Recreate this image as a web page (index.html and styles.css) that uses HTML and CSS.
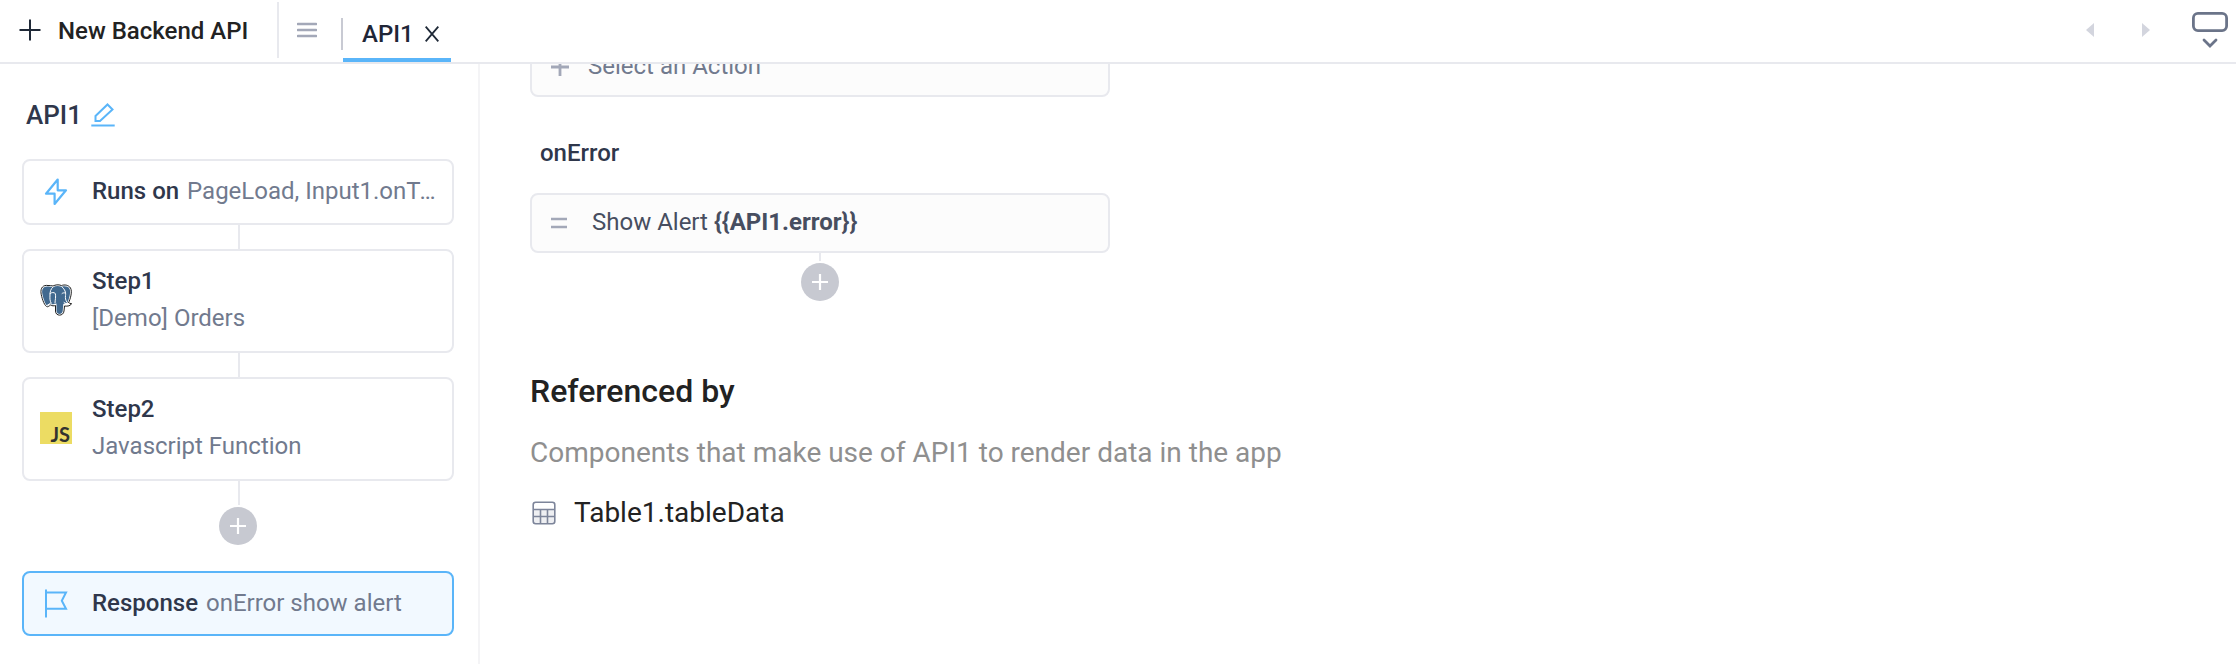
FILE: index.html
```html
<!DOCTYPE html>
<html lang="en">
  <head>
    <meta charset="UTF-8" />
    <title>API1</title>
    <link rel="stylesheet" href="styles.css">
  </head>
  <body>
    <header class="topbar">
      <button class="new-api">
        <svg width="22" height="22" viewBox="0 0 22 22"><path d="M11 0.5v21M0.5 11h21" stroke="#1f2937" stroke-width="2" fill="none" /></svg>
        <span>New Backend API</span>
      </button>
      <button class="menu-btn">
        <svg width="20" height="16" viewBox="0 0 20 16"><path d="M1 2h18M1 8h18M1 14h18" stroke="#a3a8b8" stroke-width="2.6" stroke-linecap="round" /></svg>
      </button>
      <div class="tab active">
        <span>API1</span>
        <svg width="14" height="16" viewBox="0 0 14 16"><path d="M0.7 0.7l12.6 14.6M13.3 0.7L0.7 15.3" stroke="#1f2937" stroke-width="1.8" /></svg>
      </div>
      <div class="topbar-right">
        <svg width="8" height="14" viewBox="0 0 8 14"><path d="M8 0v14L0 7z" fill="#d3d5de" /></svg>
        <svg width="8" height="14" viewBox="0 0 8 14"><path d="M0 0v14l8-7z" fill="#d3d5de" /></svg>
        <svg class="dock" width="36" height="36" viewBox="0 0 36 36" fill="none" stroke="#6b7489">
          <rect x="1.4" y="1.4" width="33.2" height="17.2" rx="4.5" stroke-width="2.8" />
          <path d="M12 28l6 6 6-6" stroke-width="2.8" stroke-linecap="round" />
        </svg>
      </div>
    </header>

    <div class="layout">
      <aside class="sidebar">
        <div class="api-name">
          <span>API1</span>
          <svg width="24" height="24" viewBox="0 0 24 24" fill="none" stroke="#5ab5f9" stroke-width="2">
            <path d="M4.5 13L16.5 1.5l5 5L9 18H4.5z" />
            <path d="M0.3 22.5h23.4" />
          </svg>
        </div>

        <div class="step">
          <svg class="step-icon" width="32" height="32" viewBox="0 0 32 32" fill="none" stroke="#5ab5f9" stroke-width="2.2" stroke-linejoin="round">
            <path d="M17.7 4.500L6 18.700h8.600V29L26 15.300h-8.300z" />
          </svg>
          <div class="step-line"><b>Runs on</b> PageLoad, Input1.onTextChanged</div>
        </div>
        <div class="connector"></div>

        <div class="step tall">
          <svg class="step-icon" width="32" height="32" viewBox="0 0 32 32" fill="none" stroke-linejoin="round" stroke-linecap="round">
            <!-- head, ears and trunk -->
            <path d="M8 1.500C3 0.500 0.500 4 1 9c0.500 4 3 12 5.500 13.500 1.500 0.800 2.500-0.500 4-1.500 1.500 1 3.500 1 5 0.500V27c0 5.500 8 5.500 8.500 0l0.500-5c3 0.500 6.500-0.200 7-2.500-1 0-2 0-3-0.500C30.500 14.500 32.500 7.500 30.500 4 28.500 0.800 24.500 0.500 21.500 1.500 18 0.300 15.500 0.800 13 2 11.500 1.500 9.500 1.500 8 1.500z" fill="#fff" stroke="#222" stroke-width="1" />
            <path d="M8 2.500C3.500 2 1.700 5 2.200 9c0.500 3.800 2.800 11 4.800 12.500 1 0.500 1.800-0.800 3-1.800 1.800 0.800 4 0.800 6.500-0.200V27c0.300 4 5.800 4 6.200 0l0.600-7 4.200-1.500C29.500 14 31 7.500 29.500 4.800 28 2 24.500 2 21.500 2.700 18 1.500 15.500 2 13 3.200 11.500 2.700 9.500 2.500 8 2.500z" fill="#41698f" />
            <path d="M13 3c-2.500 2-3 5-3 8 0 3-0.500 5.500 1.200 8.200M10 9.500c1.800-1.300 4-1.300 5.300 0 0.800 3-0.200 6.500-0.300 9.500M22 3c3 2.500 4 5.500 3.500 8.500-0.300 2.500 0 4.500 1.300 6.500M22 9.500c0.800-0.800 2.300-0.800 3.500-0.500M24 18.500c1.500 1.300 3.500 1.300 5 1M7 21.500l3.500-2.300" stroke="#fff" stroke-width="1" />
          </svg>
          <div class="step-text">
            <b>Step1</b>
            <span>[Demo] Orders</span>
          </div>
        </div>
        <div class="connector"></div>

        <div class="step tall">
          <div class="js-logo">JS</div>
          <div class="step-text">
            <b>Step2</b>
            <span>Javascript Function</span>
          </div>
        </div>
        <div class="connector"></div>
        <button class="add-btn">
          <svg width="16" height="16" viewBox="0 0 16 16"><path d="M8 0v16M0 8h16" stroke="#fff" stroke-width="2.2" /></svg>
        </button>

        <div class="step selected">
          <svg class="step-icon" width="32" height="32" viewBox="0 0 32 32" fill="none" stroke="#5ab5f9" stroke-width="2">
            <path d="M6 2.500v28M6 5.500h20l-4.200 8.200 4.200 8H6" />
          </svg>
          <div class="step-line"><b>Response</b> onError show alert</div>
        </div>
      </aside>

      <main class="content">
        <div class="action placeholder">
          <svg width="18" height="18" viewBox="0 0 18 18"><path d="M9 0v18M0 9h18" stroke="#a3a8b8" stroke-width="2.8" /></svg>
          <span>Select an Action</span>
        </div>

        <h3 class="event-name">onError</h3>
        <div class="action">
          <svg width="16" height="12" viewBox="0 0 16 12"><path d="M0 2h16M0 10h16" stroke="#a3a8b8" stroke-width="2.6" /></svg>
          <span>Show Alert <b>{{API1.error}}</b></span>
        </div>
        <div class="add-action">
          <div class="connector short"></div>
          <button class="add-btn">
            <svg width="16" height="16" viewBox="0 0 16 16"><path d="M8 0v16M0 8h16" stroke="#fff" stroke-width="2.2" /></svg>
          </button>
        </div>

        <h2 class="ref-title">Referenced by</h2>
        <p class="ref-desc">Components that make use of API1 to render data in the app</p>
        <div class="ref-item">
          <svg width="24" height="24" viewBox="0 0 24 24" fill="none" stroke="#7d859a" stroke-width="1.6">
            <path d="M1.500 8.500h21V22h-21z" fill="#eeeff2" stroke="none" />
            <rect x="1.200" y="1.200" width="21.600" height="21.600" rx="2.500" />
            <path d="M1 8.500h22M1 15.500h22M8.500 8.500V23M15.500 8.500V23" />
          </svg>
          <span>Table1.tableData</span>
        </div>
      </main>
    </div>
  </body>
</html>
```

FILE: styles.css
```css
* {
  box-sizing: border-box;
}
body {
  margin: 0;
  height: 664px;
  overflow: hidden;
  background: #fff;
  font-family: Roboto, "Liberation Sans", sans-serif;
  font-size: 24px;
  line-height: 36px;
  color: #2f374b;
}
svg {
  display: block;
  flex: none;
}
b {
  font-weight: 500;
}
button {
  border: 0;
  padding: 0;
  background: none;
  font: inherit;
}

/* top bar */
.topbar {
  display: flex;
  height: 64px;
  border-bottom: 2px solid #e8e9ee;
}
.new-api {
  display: flex;
  align-items: center;
  gap: 17px;
  width: 279px;
  height: 56px;
  margin-top: 2px;
  padding-left: 19px;
  border-right: 2px solid #e8e9ee;
  font-weight: 500;
  color: #222;
}
.new-api span {
  padding-top: 2px;
}
.menu-btn {
  display: flex;
  align-items: center;
  width: 64px;
  height: 32px;
  margin-top: 18px;
  padding: 0 0 8px 18px;
  border-right: 2px solid #c8cad3;
}
.tab {
  display: flex;
  align-items: center;
  gap: 11px;
  height: 62px;
  width: 108px;
  padding: 6px 0 0 19px;
  font-weight: 500;
  color: #1f2637;
}
.tab.active {
  background: linear-gradient(#5ab5f9, #5ab5f9) bottom / 100% 4px no-repeat;
}
.topbar-right {
  display: flex;
  align-items: center;
  margin-left: auto;
  padding: 0 8px 2px 0;
  gap: 48px;
}
.dock {
  margin-left: -6px;
}

.layout {
  display: flex;
  height: 600px;
}

/* steps column */
.sidebar {
  width: 480px;
  padding: 33px 24px 0 22px;
  border-right: 2px solid #f4f4f6;
}
.api-name {
  display: flex;
  align-items: center;
  gap: 9px;
  height: 36px;
  margin-bottom: 26px;
  padding-left: 4px;
  font-size: 26px;
  font-weight: 500;
}
.step {
  display: flex;
  align-items: center;
  gap: 20px;
  width: 432px;
  height: 66px;
  padding: 0 16px 2px;
  border: 2px solid #e8e9ee;
  border-radius: 8px;
  background: #fff;
}
.step.tall {
  height: 104px;
}
.step.selected {
  height: 65px;
  margin-top: 26px;
  border-color: #5ab5f9;
  background: #f2f9ff;
}
.step-line {
  min-width: 0;
  overflow: hidden;
  white-space: nowrap;
  text-overflow: ellipsis;
  color: #717a8e;
}
.step b {
  color: #2f374b;
}
.step-line b {
  margin-right: 2px;
}
.step-text {
  display: flex;
  flex-direction: column;
  gap: 1px;
  padding-bottom: 1px;
  color: #717a8e;
}
.js-logo {
  width: 32px;
  height: 32px;
  padding: 12px 2px 0 0;
  background: #ecdc63;
  color: #323330;
  font: bold 20px/20px Lato, sans-serif;
  text-align: right;
}
.connector {
  width: 2px;
  height: 24px;
  margin-left: 216px;
  background: #e8e9ee;
}
.add-btn {
  display: flex;
  align-items: center;
  justify-content: center;
  width: 38px;
  height: 38px;
  margin: 2px 0 0 197px;
  border-radius: 50%;
  background: #c7c9d1;
}

/* response settings, scrolled under the top bar */
.content {
  flex: 1;
  padding-left: 50px;
  overflow: hidden;
}
.action {
  display: flex;
  align-items: center;
  gap: 25px;
  width: 580px;
  height: 60px;
  padding-left: 19px;
  border: 2px solid #e8e9ee;
  border-radius: 8px;
  background: #fcfcfc;
  color: #474e60;
}
.action span {
  padding-bottom: 2px;
}
.action b {
  font-weight: 700;
}
.action.placeholder {
  gap: 19px;
  margin-top: -27px;
  color: #717a8e;
}
.event-name {
  margin: 38px 0 22px 10px;
  font-size: 24px;
  font-weight: 500;
}
.add-action {
  display: flex;
  flex-direction: column;
  align-items: center;
  width: 580px;
}
.add-action .add-btn {
  margin-left: 0;
}
.connector.short {
  height: 8px;
  margin-left: 0;
}
.ref-title {
  margin: 69px 0 0;
  font-size: 32px;
  line-height: 42px;
  font-weight: 500;
  color: #222;
}
.ref-desc {
  margin: 20px 0 0;
  font-size: 28px;
  line-height: 42px;
  color: #8f8f8f;
}
.ref-item {
  display: flex;
  align-items: center;
  gap: 18px;
  margin-top: 18px;
  padding-left: 2px;
  font-size: 28px;
  line-height: 42px;
  color: #222;
}
```
